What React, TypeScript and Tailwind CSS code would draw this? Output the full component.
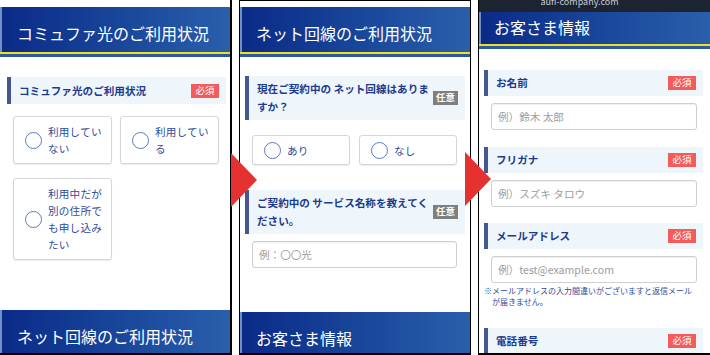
import React from 'react';

const font = "font-['Noto_Sans_CJK_JP','Noto_Sans',sans-serif]";

const Header = ({ title, main = 45, pt = 14, pl = 17 }: { title: string; main?: number; pt?: number; pl?: number }) => (
  <div className="flex flex-col">
    <div
      className="flex border-l-2 border-[#6f8fcc] bg-linear-to-r from-[#0b2a88] to-[#2a5fab] text-[16px] leading-[24px] text-white"
      style={{ height: main, paddingTop: pt, paddingLeft: pl - 2 }}
    >
      {title}
    </div>
    <div className="h-[2px] bg-[#efe21a]" />
    <div className="h-[3px] bg-[#2b57a6]" />
  </div>
);

const Badge = ({ kind }: { kind: 'req' | 'opt' }) =>
  kind === 'req' ? (
    <span className="flex h-[14px] w-[28px] shrink-0 items-center justify-center bg-[#f45c5c] text-[9.5px] leading-none text-white">
      必須
    </span>
  ) : (
    <span className="flex h-[14px] w-[25px] shrink-0 items-center justify-center bg-[#7f7f7f] text-[9.5px] font-bold leading-none text-white">
      任意
    </span>
  );

const Label = ({ lines, kind, h, className = '' }: { lines: string[]; kind: 'req' | 'opt'; h: number; className?: string }) => (
  <div
    className={`flex items-center justify-between border-l-4 border-[#44578f] bg-[#eef6fc] pl-[8px] pr-[7px] ${className}`}
    style={{ height: h }}
  >
    <div className="text-[10.6px] font-bold leading-[18px] text-[#1d3a8c]">
      {lines.map((l) => (
        <div key={l}>{l}</div>
      ))}
    </div>
    <Badge kind={kind} />
  </div>
);

const Radio = () => (
  <span className="h-[17px] w-[17px] shrink-0 rounded-full border-[1.5px] border-[#5a78c6] bg-white" />
);

const Option = ({ lines, h, w, pl = 11 }: { lines: string[]; h: number; w: number; pl?: number }) => (
  <div
    className="flex items-center gap-[6px] rounded-[3px] border border-[#d6d6d6] bg-white shadow-[0_1px_1px_rgba(0,0,0,0.08)]"
    style={{ height: h, width: w, paddingLeft: pl }}
  >
    <Radio />
    <div className="text-[10.6px] leading-[17px] tracking-[0.02em] text-[#2d4b9c]">
      {lines.map((l) => (
        <div key={l}>{l}</div>
      ))}
    </div>
  </div>
);

const Field = ({ placeholder, className = '' }: { placeholder: string; className?: string }) => (
  <input
    readOnly
    placeholder={placeholder}
    className={`block h-[27px] rounded-[3px] border border-[#cfcfcf] bg-white px-[6px] text-[10.6px] shadow-[inset_0_1px_1px_rgba(0,0,0,0.06)] outline-none placeholder:text-[#9c9c9c] ${className}`}
  />
);

const Arrow = ({ left, top }: { left: number; top: number }) => (
  <svg className="absolute" style={{ left, top }} width="27" height="54" viewBox="0 0 27 54">
    <polygon points="0,0 26,27 0,54" fill="#e5312f" />
  </svg>
);

export default function App() {
  return (
    <div className={`relative flex h-[355px] w-[710px] overflow-hidden bg-white ${font}`}>
      {/* panel 1 */}
      <div className="h-[355px] w-[232px] shrink-0 overflow-hidden border-r-2 border-b-2 border-black">
        <div className="h-[7px]" />
        <Header title="コミュファ光のご利用状況" />
        <Label lines={['コミュファ光のご利用状況']} kind="req" h={27} className="mt-[20px] ml-[7px] mr-[4px]" />
        <div className="mt-[12px] grid grid-cols-[99px_99px] gap-x-[8px] gap-y-[14px] pl-[13px]">
          <Option lines={['利用してい', 'ない']} h={48} w={99} />
          <Option lines={['利用してい', 'る']} h={48} w={99} />
          <Option lines={['利用中だが', '別の住所で', 'も申し込み', 'たい']} h={82} w={99} />
        </div>
        <div className="mt-[50px]">
          <Header title="ネット回線のご利用状況" />
        </div>
      </div>

      <div className="w-[7px] shrink-0" />

      {/* panel 2 */}
      <div className="h-[355px] w-[232px] shrink-0 overflow-hidden border-x border-t border-b-2 border-black">
        <div className="h-[6px]" />
        <Header title="ネット回線のご利用状況" pl={16} />
        <Label
          lines={['現在ご契約中の ネット回線はありま', 'すか？']}
          kind="opt"
          h={44}
          className="mt-[19px] mx-[5px]"
        />
        <div className="mt-[15px] flex gap-[9px] pl-[12px]">
          <Option lines={['あり']} h={30} w={98} />
          <Option lines={['なし']} h={30} w={98} />
        </div>
        <Label
          lines={['ご契約中の サービス名称を教えてく', 'ださい。']}
          kind="opt"
          h={44}
          className="mt-[25px] mx-[5px]"
        />
        <Field placeholder="例：〇〇光" className="mt-[7px] ml-[12px] w-[205px]" />
        <div className="mt-[44px]">
          <Header title="お客さま情報" pl={16} />
        </div>
      </div>

      <div className="w-[7px] shrink-0" />

      {/* panel 3 */}
      <div className="h-[355px] w-[232px] shrink-0 overflow-hidden border-l border-b-2 border-black">
        <div className="flex h-[12px] items-start justify-center overflow-hidden bg-[#1c2331] pr-[30px]">
          <span className="-mt-[4px] text-[9px] leading-[12px] text-[#c9ccd3]">aufi-company.com</span>
        </div>
        <Header title="お客さま情報" main={32} pt={3} pl={15} />
        <Label lines={['お名前']} kind="req" h={26} className="mt-[21px] ml-[5px] mr-[7px]" />
        <Field placeholder="例）鈴木 太郎" className="mt-[7px] ml-[12px] w-[206px]" />
        <Label lines={['フリガナ']} kind="req" h={26} className="mt-[17px] ml-[5px] mr-[7px]" />
        <Field placeholder="例）スズキ タロウ" className="mt-[7px] ml-[12px] w-[206px]" />
        <Label lines={['メールアドレス']} kind="req" h={26} className="mt-[16px] ml-[5px] mr-[7px]" />
        <Field placeholder="例）test@example.com" className="mt-[7px] ml-[12px] w-[206px]" />
        <p className="mt-[2px] ml-[5px] pr-[12px] pl-[8px] -indent-[8px] text-[8px] leading-[11px] text-[#2d4b9c]">
          ※メールアドレスの入力間違いがございますと返信メールが届きません。
        </p>
        <Label lines={['電話番号']} kind="req" h={26} className="mt-[21px] ml-[5px] mr-[7px]" />
      </div>

      <Arrow left={231} top={153} />
      <Arrow left={465} top={152} />
    </div>
  );
}
